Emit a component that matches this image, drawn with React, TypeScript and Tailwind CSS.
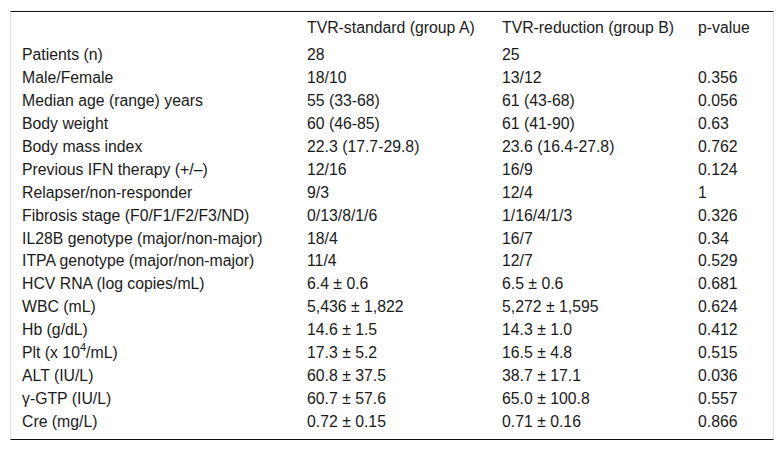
const rows: [React.ReactNode, string, string, string][] = [
  ['Patients (n)', '28', '25', ''],
  ['Male/Female', '18/10', '13/12', '0.356'],
  ['Median age (range) years', '55 (33-68)', '61 (43-68)', '0.056'],
  ['Body weight', '60 (46-85)', '61 (41-90)', '0.63'],
  ['Body mass index', '22.3 (17.7-29.8)', '23.6 (16.4-27.8)', '0.762'],
  ['Previous IFN therapy (+/\u2013)', '12/16', '16/9', '0.124'],
  ['Relapser/non-responder', '9/3', '12/4', '1'],
  ['Fibrosis stage (F0/F1/F2/F3/ND)', '0/13/8/1/6', '1/16/4/1/3', '0.326'],
  ['IL28B genotype (major/non-major)', '18/4', '16/7', '0.34'],
  ['ITPA genotype (major/non-major)', '11/4', '12/7', '0.529'],
  ['HCV RNA (log copies/mL)', '6.4 \u00b1 0.6', '6.5 \u00b1 0.6', '0.681'],
  ['WBC (mL)', '5,436 \u00b1 1,822', '5,272 \u00b1 1,595', '0.624'],
  ['Hb (g/dL)', '14.6 \u00b1 1.5', '14.3 \u00b1 1.0', '0.412'],
  [
    <>
      Plt (x 10<sup className="relative -top-[1px] text-[11px] align-super leading-none">4</sup>/mL)
    </>,
    '17.3 \u00b1 5.2',
    '16.5 \u00b1 4.8',
    '0.515',
  ],
  ['ALT (IU/L)', '60.8 \u00b1 37.5', '38.7 \u00b1 17.1', '0.036'],
  ['\u03b3-GTP (IU/L)', '60.7 \u00b1 57.6', '65.0 \u00b1 100.8', '0.557'],
  ['Cre (mg/L)', '0.72 \u00b1 0.15', '0.71 \u00b1 0.16', '0.866'],
]

const cols = 'grid grid-cols-[285px_195px_196px_1fr] h-[22.9px] items-center whitespace-nowrap'

export default function App() {
  return (
    <div className="min-h-[451px] w-full bg-white pt-[11px] font-['Liberation_Sans',Arial,sans-serif] text-[15.8px] text-[#1a1a1a]">
      <div className="mx-[10px] border-x border-x-[#e2e2e2] border-y border-y-[#111] pb-[6px] pl-[11px]">
        <div className={`${cols} mt-[4px] mb-[4.5px]`}>
          <span />
          <span>TVR-standard (group A)</span>
          <span>TVR-reduction (group B)</span>
          <span>p-value</span>
        </div>
        {rows.map(([label, a, b, p], i) => (
          <div key={i} className={cols}>
            <span>{label}</span>
            <span>{a}</span>
            <span>{b}</span>
            <span>{p}</span>
          </div>
        ))}
      </div>
    </div>
  )
}
